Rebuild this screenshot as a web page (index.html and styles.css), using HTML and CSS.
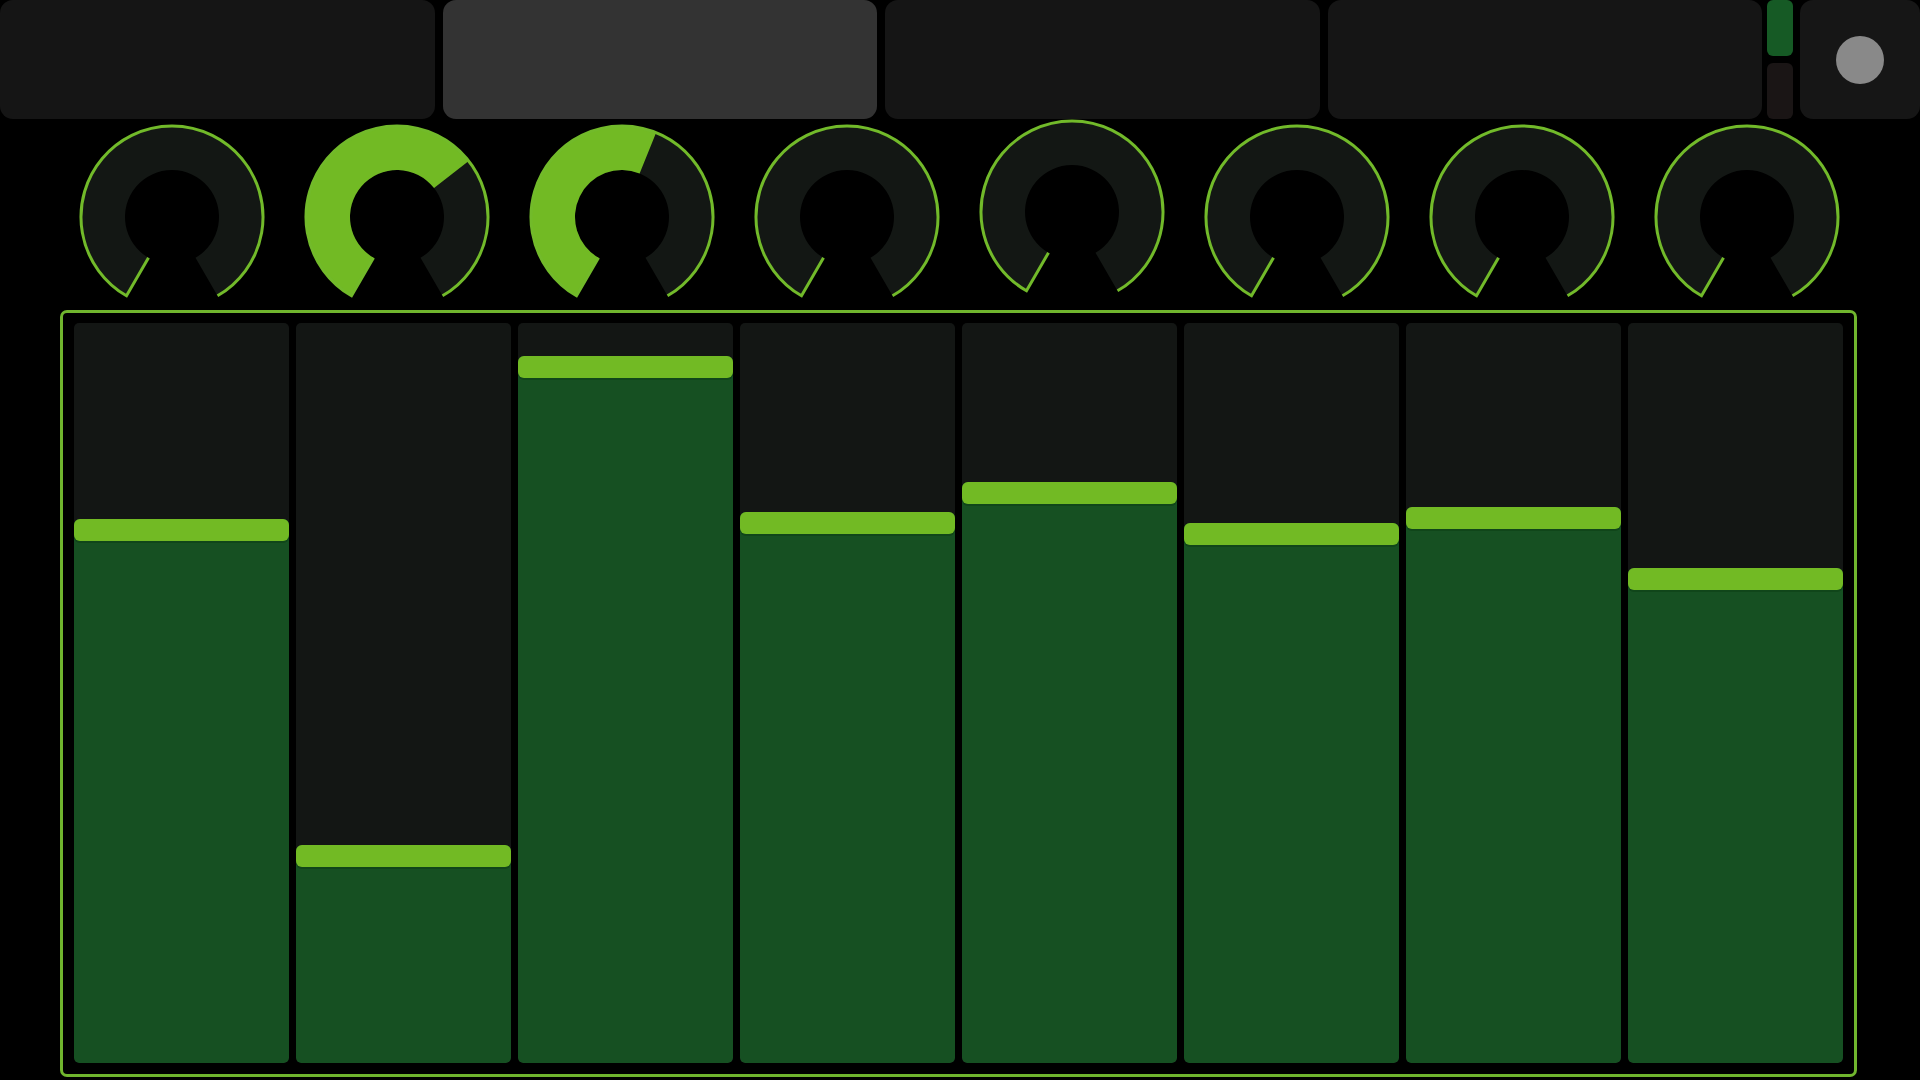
FILE: index.html
```html
<!DOCTYPE html>
<html lang="en" dir="ltr">
  <head>
    <meta charset="utf-8">
    <title>Mixer</title>
    <link rel="stylesheet" href="styles.css">
  </head>
  <body>
    <div class="topbar">
      <div class="pad"></div>
      <div class="pad active"></div>
      <div class="pad"></div>
      <div class="pad"></div>
      <div class="meter">
        <span class="meter-on"></span>
        <span class="meter-off"></span>
      </div>
      <div class="pad small">
        <span class="dot"></span>
      </div>
    </div>

    <div class="knobs">
      <svg class="knob" width="186" height="176" viewBox="0 0 186 176">
        <path class="ring" d="M69.5 133.7 L47.5 171.81 A91 91 0 1 1 138.5 171.81 L116.5 133.7 A47 47 0 1 0 69.5 133.7 Z"/>
        <path class="edge" d="M69.5 133.7 L47.5 171.81 A91 91 0 1 1 138.5 171.81"/>
      </svg>
      <svg class="knob" width="186" height="176" viewBox="0 0 186 176">
        <path class="ring" d="M69.5 133.7 L47.5 171.81 A91 91 0 1 1 138.5 171.81 L116.5 133.7 A47 47 0 1 0 69.5 133.7 Z"/>
        <path class="value" d="M69.5 133.7 L47.5 171.81 A91 91 0 1 1 164.71 36.97 L130.04 64.06 A47 47 0 1 0 69.5 133.7 Z"/>
        <path class="edge" d="M69.5 133.7 L47.5 171.81 A91 91 0 1 1 138.5 171.81"/>
      </svg>
      <svg class="knob" width="186" height="176" viewBox="0 0 186 176">
        <path class="ring" d="M69.5 133.7 L47.5 171.81 A91 91 0 1 1 138.5 171.81 L116.5 133.7 A47 47 0 1 0 69.5 133.7 Z"/>
        <path class="value" d="M69.5 133.7 L47.5 171.81 A91 91 0 0 1 127.09 8.63 L110.61 49.42 A47 47 0 0 0 69.5 133.7 Z"/>
        <path class="edge" d="M69.5 133.7 L47.5 171.81 A91 91 0 1 1 138.5 171.81"/>
      </svg>
      <svg class="knob" width="186" height="176" viewBox="0 0 186 176">
        <path class="ring" d="M69.5 133.7 L47.5 171.81 A91 91 0 1 1 138.5 171.81 L116.5 133.7 A47 47 0 1 0 69.5 133.7 Z"/>
        <path class="edge" d="M69.5 133.7 L47.5 171.81 A91 91 0 1 1 138.5 171.81"/>
      </svg>
      <svg class="knob knob-up" width="186" height="176" viewBox="0 0 186 176">
        <path class="ring" d="M69.5 133.7 L47.5 171.81 A91 91 0 1 1 138.5 171.81 L116.5 133.7 A47 47 0 1 0 69.5 133.7 Z"/>
        <path class="edge" d="M69.5 133.7 L47.5 171.81 A91 91 0 1 1 138.5 171.81"/>
      </svg>
      <svg class="knob" width="186" height="176" viewBox="0 0 186 176">
        <path class="ring" d="M69.5 133.7 L47.5 171.81 A91 91 0 1 1 138.5 171.81 L116.5 133.7 A47 47 0 1 0 69.5 133.7 Z"/>
        <path class="edge" d="M69.5 133.7 L47.5 171.81 A91 91 0 1 1 138.5 171.81"/>
      </svg>
      <svg class="knob" width="186" height="176" viewBox="0 0 186 176">
        <path class="ring" d="M69.5 133.7 L47.5 171.81 A91 91 0 1 1 138.5 171.81 L116.5 133.7 A47 47 0 1 0 69.5 133.7 Z"/>
        <path class="edge" d="M69.5 133.7 L47.5 171.81 A91 91 0 1 1 138.5 171.81"/>
      </svg>
      <svg class="knob" width="186" height="176" viewBox="0 0 186 176">
        <path class="ring" d="M69.5 133.7 L47.5 171.81 A91 91 0 1 1 138.5 171.81 L116.5 133.7 A47 47 0 1 0 69.5 133.7 Z"/>
        <path class="edge" d="M69.5 133.7 L47.5 171.81 A91 91 0 1 1 138.5 171.81"/>
      </svg>
    </div>

    <div class="faders">
      <div class="fader"><div class="level" style="height: 544px"><div class="handle"></div></div></div>
      <div class="fader"><div class="level" style="height: 218px"><div class="handle"></div></div></div>
      <div class="fader"><div class="level" style="height: 707px"><div class="handle"></div></div></div>
      <div class="fader"><div class="level" style="height: 551px"><div class="handle"></div></div></div>
      <div class="fader"><div class="level" style="height: 581px"><div class="handle"></div></div></div>
      <div class="fader"><div class="level" style="height: 540px"><div class="handle"></div></div></div>
      <div class="fader"><div class="level" style="height: 556px"><div class="handle"></div></div></div>
      <div class="fader"><div class="level" style="height: 495px"><div class="handle"></div></div></div>
    </div>
  </body>
</html>
```

FILE: styles.css
```css
body {
  margin: 0;
  height: 1080px;
  overflow: hidden;
  background-color: #000;
  font-family: "Liberation Sans", Arial, sans-serif;
}

/* Top row - the pads, the level meter and the record button */
.topbar {
  display: flex;
  height: 119px;
}

.pad {
  width: 435px;
  margin-right: 8px;
  background-color: #151515;
  border-radius: 13px;
}

.pad.active {
  background-color: #333333;
}

.pad.small {
  width: 120px;
  margin-right: 0;
  display: flex;
  align-items: center;
  justify-content: center;
  background-color: #161616;
}

.dot {
  width: 48px;
  height: 48px;
  border-radius: 50%;
  background-color: #898989;
}

.meter {
  width: 26px;
  margin: 0 7px 0 -3px;
  display: flex;
  flex-direction: column;
  gap: 7px;
}

.meter-on {
  height: 56px;
  background-color: #165a25;
  border-radius: 6px;
}

.meter-off {
  flex: 1;
  background-color: #1a1515;
  border-radius: 6px;
}

/* Knobs */
.knobs {
  display: flex;
  align-items: flex-start;
  gap: 39px;
  margin-top: 5px;
  padding-left: 79px;
  height: 176px;
}

.knob {
  display: block;
  flex: none;
}

.knob-up {
  margin-top: -5px;
}

.ring {
  fill: #131714;
}

.value {
  fill: #72ba24;
}

.edge {
  fill: none;
  stroke: #72ba2a;
  stroke-width: 3;
}

/* Fader panel */
.faders {
  box-sizing: border-box;
  height: 767px;
  margin: 10px 63px 0 60px;
  padding: 10px 11px 11px;
  border: 3px solid #70b52e;
  border-radius: 7px;
  display: grid;
  grid-template-columns: repeat(8, 1fr);
  gap: 7px;
}

.fader {
  display: flex;
  flex-direction: column;
  justify-content: flex-end;
  background-color: #131614;
  border-radius: 5px;
  overflow: hidden;
}

.level {
  background-color: #165022;
  border-radius: 6px 6px 5px 5px;
}

.handle {
  height: 22px;
  background-color: #72ba24;
  border-radius: 6px;
  box-shadow: 0 2px 0 #10461a;
}
```
